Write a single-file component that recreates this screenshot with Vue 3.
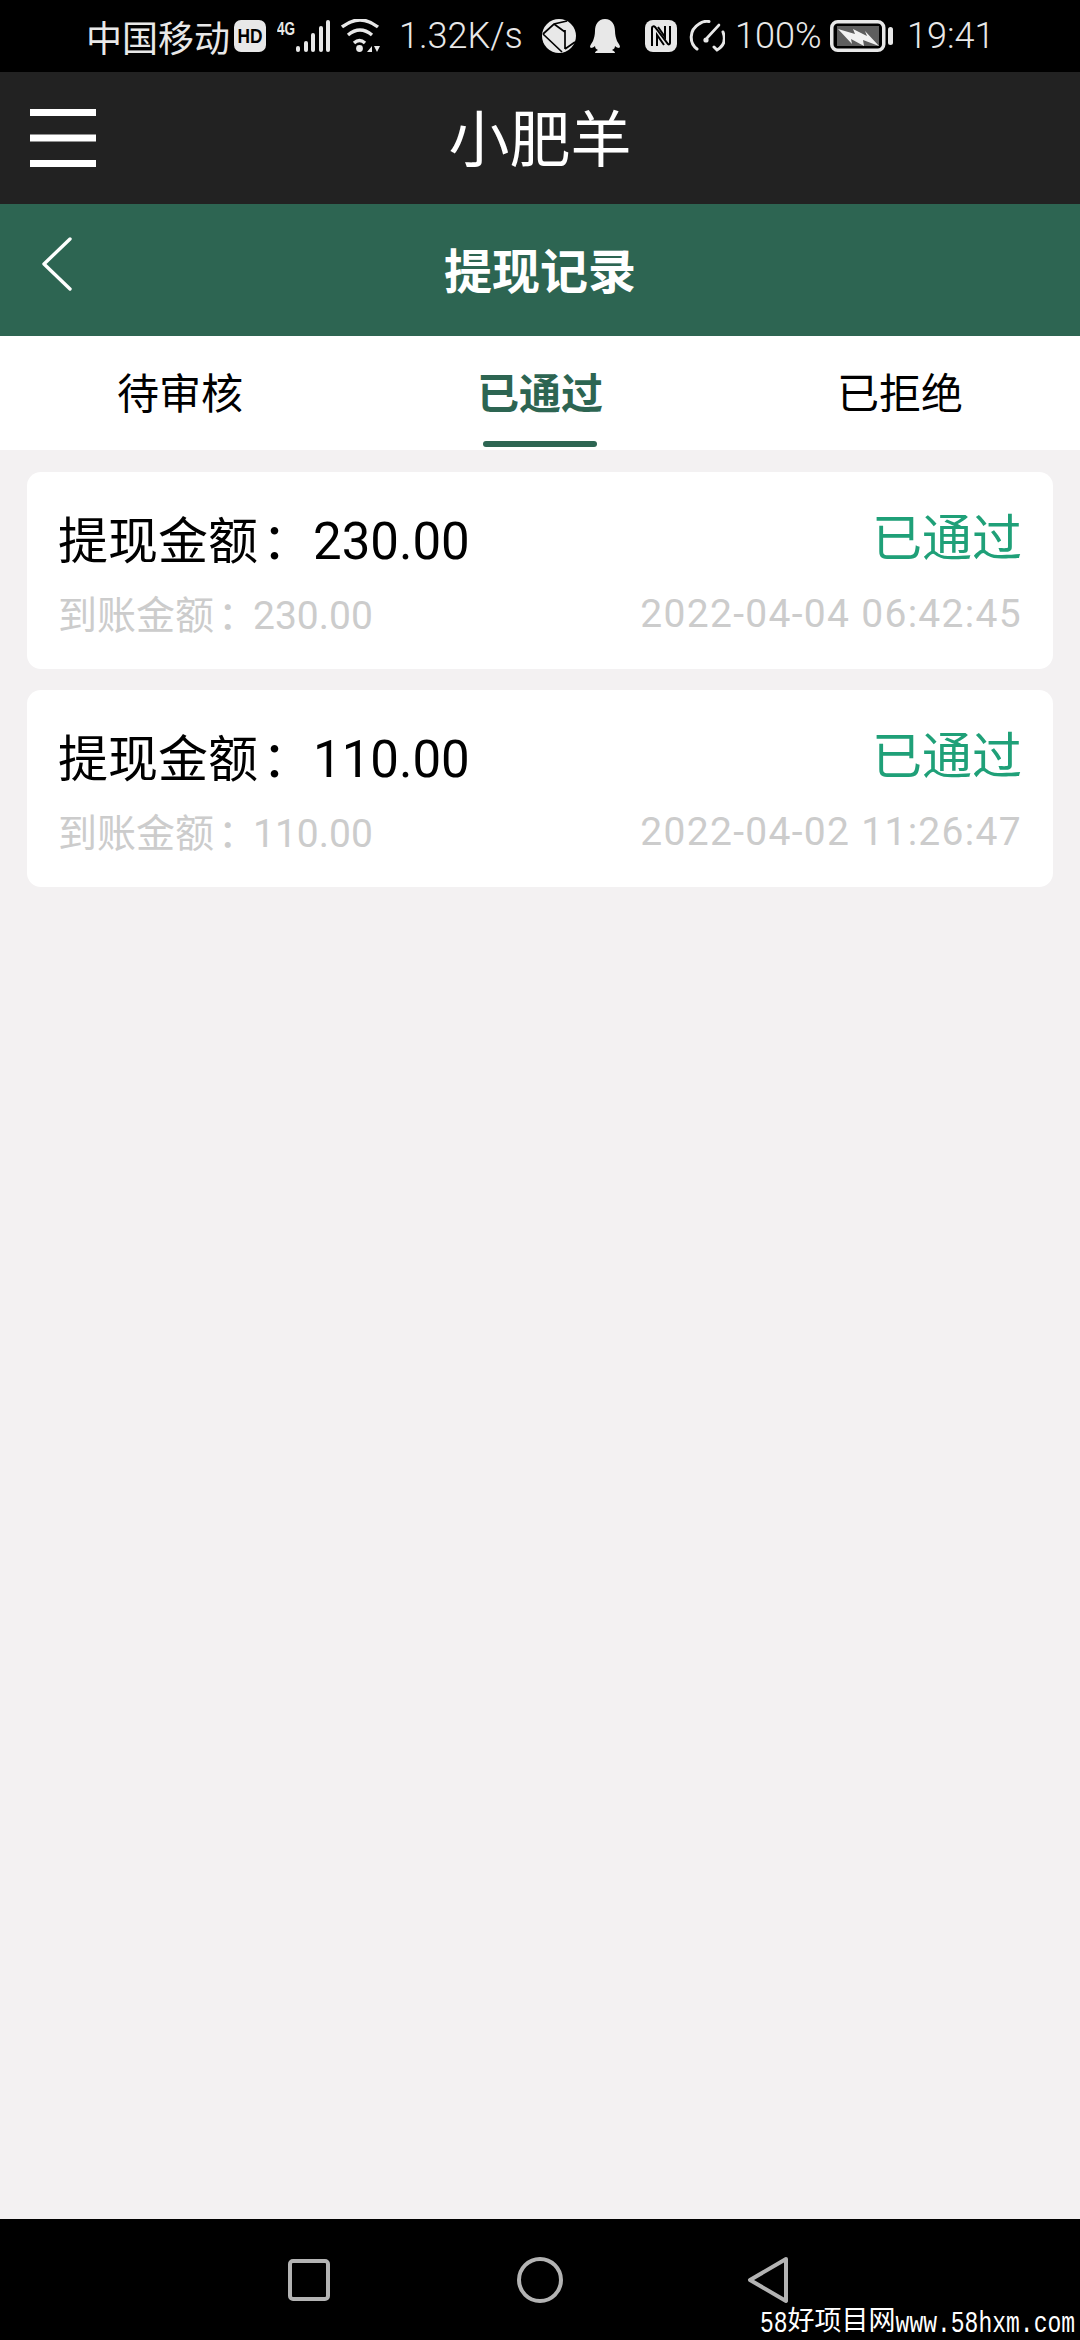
<script setup>
const records = [
  { amount: '230.00', time: '2022-04-04 06:42:45' },
  { amount: '110.00', time: '2022-04-02 11:26:47' }
]
const tabs = [
  { label: '待审核', active: false },
  { label: '已通过', active: true },
  { label: '已拒绝', active: false }
]
</script>

<template>
  <div class="page">
    <div class="status">
      <span class="carrier">中国移动</span>
      <svg class="i-hd" width="32" height="32" viewBox="0 0 32 32"><rect width="32" height="32" rx="7" fill="#e8e8e8"/><text x="16" y="23" text-anchor="middle" textLength="25" lengthAdjust="spacingAndGlyphs" class="hd">HD</text></svg>
      <svg class="i-sig" width="54" height="34" viewBox="0 0 54 34">
        <text x="0" y="16" textLength="18" lengthAdjust="spacingAndGlyphs" class="g4">4G</text>
        <rect x="19" y="27" width="4" height="6" rx="2" fill="#e8e8e8"/><rect x="27" y="22" width="4" height="11" rx="2" fill="#e8e8e8"/><rect x="34" y="14" width="4" height="19" rx="2" fill="#e8e8e8"/><rect x="42" y="7" width="4" height="26" rx="2" fill="#e8e8e8"/><rect x="49" y="1" width="4" height="32" rx="2" fill="#e8e8e8"/>
      </svg>
      <svg class="i-wifi" width="40" height="34" viewBox="0 0 40 34" fill="none" stroke="#e8e8e8" stroke-width="3.4">
        <path d="M1 8Q19 -6 37 8"/><path d="M7 16Q19 6 31 16"/><path d="M13 24Q18.500 19 24 24"/>
        <circle cx="18.500" cy="29.500" r="3.400" fill="#e8e8e8" stroke="none"/>
        <path d="M26 33l5-6v6zM33 27h6l-3 6z" fill="#e8e8e8" stroke="none"/>
      </svg>
      <span class="speed">1.32K/s</span>
      <span class="spring"></span>
      <svg class="i-globe" width="34" height="34" viewBox="0 0 34 34"><circle cx="17" cy="17" r="17" fill="#e8e8e8"/><path d="M1 15L12 5L25 2M1 15L20 33M12 5L23 13M23 11V30M23 30L33 23" fill="none" stroke="#000" stroke-width="1.700"/></svg>
      <svg class="i-qq" width="30" height="34" viewBox="0 0 30 34"><path d="M15 0C8 0 5 6 5 12c0 4-1 7-2 10-1 2-3 4-3 6l1 1c1 0 3-1 4-2 0 2 1 3 3 4-2 1-3 2-3 3h20c0-1-1-2-3-3 2-1 3-2 3-4 1 1 3 2 4 2l1-1c0-2-2-4-3-6-1-3-2-6-2-10 0-6-3-12-10-12z" fill="#e8e8e8"/></svg>
      <svg class="i-nfc" width="32" height="32" viewBox="0 0 32 32"><rect width="32" height="32" rx="8" fill="#e8e8e8"/><path d="M7 26V8c0-2 2-2 3-1l13 17c1 1 2 0 2-1V6" fill="none" stroke="#000" stroke-width="2"/><path d="M12 26V15l7 10M20 6v11l-7-10" fill="none" stroke="#000" stroke-width="2"/></svg>
      <svg class="i-gauge" width="36" height="33" viewBox="0 0 36 33" fill="none" stroke="#e8e8e8" stroke-width="3" stroke-linecap="round">
        <path d="M8 29C0 23 0 10 10 4C14 1 17 1 20 1.500"/><path d="M34 12C37 20 35 26 28 30l-3-3"/><path d="M30 5L18 18" stroke-width="2.600"/><circle cx="17" cy="20" r="2.600" fill="#e8e8e8" stroke="none"/>
      </svg>
      <span class="pct">100%</span>
      <svg class="i-bat" width="63" height="32" viewBox="0 0 63 32">
        <rect x="1.750" y="1.750" width="52" height="28.500" rx="6" fill="none" stroke="#e8e8e8" stroke-width="3.500"/>
        <rect x="7" y="6" width="42" height="20" fill="#5e5e5e"/>
        <path d="M8 9L25 14L23 9L37 16L35 11L49 26L33 20L34 26L21 19L22 24z" fill="#f2f2f2"/>
        <rect x="58" y="7" width="5" height="18" rx="2.500" fill="#e8e8e8"/>
      </svg>
      <span class="clock">19:41</span>
    </div>

    <header class="topbar">
      <svg class="menu" width="66" height="58" viewBox="0 0 66 58" fill="#fff"><rect y="0" width="66" height="7"/><rect y="25.500" width="66" height="7"/><rect y="51" width="66" height="7"/></svg>
      <span class="app-name">小肥羊</span>
    </header>

    <div class="subbar">
      <svg class="back" width="32" height="54" viewBox="0 0 32 54" fill="none" stroke="#fff" stroke-width="3.400" stroke-linecap="round" stroke-linejoin="round"><path d="M29 2L3 27l26 25"/></svg>
      <span class="sub-title">提现记录</span>
    </div>

    <nav class="tabs">
      <div v-for="t in tabs" :key="t.label" class="tab" :class="{ active: t.active }">{{ t.label }}</div>
    </nav>

    <main class="list">
      <article v-for="r in records" :key="r.time" class="card">
        <div class="row top">
          <span class="amt">提现金额<span class="colon">：</span><span class="num">{{ r.amount }}</span></span>
          <span class="state">已通过</span>
        </div>
        <div class="row bottom">
          <span>到账金额<span class="colon">：</span><span class="num">{{ r.amount }}</span></span>
          <span class="num date">{{ r.time }}</span>
        </div>
      </article>
    </main>

    <footer class="navbar">
      <svg width="42" height="42" viewBox="0 0 42 42"><rect x="2" y="2" width="38" height="38" rx="3" fill="none" stroke="#b3b3b3" stroke-width="4"/></svg>
      <svg width="46" height="46" viewBox="0 0 46 46"><circle cx="23" cy="23" r="21" fill="none" stroke="#b3b3b3" stroke-width="4"/></svg>
      <svg width="42" height="48" viewBox="0 0 42 48"><path d="M39 3L3 24l36 21z" fill="none" stroke="#b3b3b3" stroke-width="4" stroke-linejoin="round"/></svg>
      <span class="mark"><span class="lat">58</span>好项目网<span class="lat">www.58hxm.com</span></span>
    </footer>
  </div>
</template>

<style scoped>
.page {
  width: 1080px;
  height: 2340px;
  display: flex;
  flex-direction: column;
  background: #f3f1f2;
  font-family: Roboto, "Noto Sans CJK SC", sans-serif;
  overflow: hidden;
}
.status {
  height: 72px;
  background: #000;
  color: #e8e8e8;
  display: flex;
  align-items: center;
  padding-left: 86px;
  font-size: 36px;
  font-weight: 300;
  box-sizing: border-box;
}
.carrier { font-size: 36px; font-weight: 400; width: 148px; white-space: nowrap; }
.hd { font: 700 20px "Liberation Sans", sans-serif; fill: #000; }
.g4 { font: 700 19px "Liberation Sans", sans-serif; fill: #e8e8e8; }
.i-sig { margin-left: 11px; }
.i-wifi { margin-left: 10px; }
.speed { margin-left: 18px; width: 117px; white-space: nowrap; }
.spring { width: 26px; }
.i-qq { margin-left: 14px; }
.i-nfc { margin-left: 25px; }
.i-gauge { margin-left: 12px; }
.pct { margin-left: 10px; width: 85px; white-space: nowrap; }
.i-bat { margin-left: 10px; }
.clock { margin-left: 14px; white-space: nowrap; }
.topbar {
  height: 132px;
  background: #222;
  display: flex;
  align-items: center;
  justify-content: center;
  position: relative;
  padding-bottom: 5px;
  box-sizing: border-box;
}
.menu { position: absolute; left: 30px; top: 37px; }
.app-name { color: #fff; font-size: 61px; font-weight: 400; }
.subbar {
  height: 132px;
  background: #2d6552;
  display: flex;
  align-items: center;
  justify-content: center;
  position: relative;
  padding-bottom: 5px;
  box-sizing: border-box;
}
.back { position: absolute; left: 41px; top: 33px; }
.sub-title { color: #fff; font-size: 48px; font-weight: 700; }
.tabs { height: 114px; background: #fff; display: flex; }
.tab {
  flex: 1;
  display: flex;
  align-items: center;
  justify-content: center;
  font-size: 42px;
  color: #000;
  position: relative;
  padding-bottom: 5px;
  box-sizing: border-box;
}
.tab.active { color: #2d6552; font-weight: 700; }
.tab.active::after {
  content: "";
  position: absolute;
  left: 123px;
  width: 114px;
  bottom: 3px;
  height: 6px;
  border-radius: 3px;
  background: #2d6552;
}
.list {
  flex: 1;
  padding: 22px 27px 0;
  display: flex;
  flex-direction: column;
  gap: 21px;
}
.card {
  height: 197px;
  background: #fff;
  border-radius: 14px;
  padding: 0 31px;
  display: flex;
  flex-direction: column;
  box-sizing: border-box;
}
.row { display: flex; justify-content: space-between; align-items: center; line-height: 1; }
.top { margin-top: 35px; height: 64px; font-size: 50px; color: #000; }
.state { color: #1fa078; }
.bottom { margin-top: 19px; height: 48px; font-size: 39px; color: #ccc; }
.colon { font-family: "Noto Sans CJK SC", sans-serif; margin-left: 4px; margin-right: -4px; }
.num { font-family: Roboto, sans-serif; font-weight: 400; }
.amt .num { font-size: 51px; margin-left: 5px; }
.date { letter-spacing: 1.300px; }
.navbar {
  height: 121px;
  background: #000;
  position: relative;
  display: flex;
  align-items: center;
  box-sizing: border-box;
  padding: 0 0 0 288px;
}
.navbar svg:nth-child(2) { margin-left: 187px; }
.navbar svg:nth-child(3) { margin-left: 184px; }
.mark {
  position: absolute;
  left: 760px;
  top: 88px;
  color: #fff;
  font: 27px/24px "Noto Sans CJK SC", sans-serif;
  white-space: nowrap;
}
.lat {
  display: inline-block;
  font: 23px/24px "Liberation Mono", monospace;
  transform: scaleY(1.300);
}
</style>
